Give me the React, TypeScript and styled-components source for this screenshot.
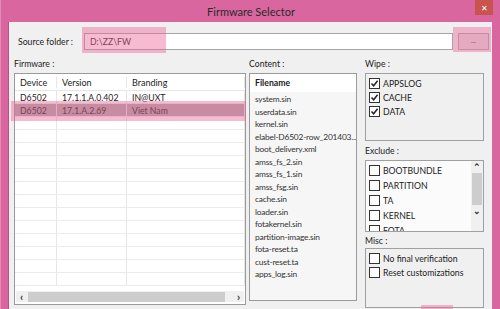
import React from "react"
import styled, { createGlobalStyle } from "styled-components"

const Global = createGlobalStyle`
  html, body { margin: 0; padding: 0; background: #d9669f; }
  body { font-family: Lato, "Noto Sans", sans-serif; }
`

const firmware = [
  { device: "D6502", version: "17.1.1.A.0.402", branding: "IN@UXT" },
  { device: "D6502", version: "17.1.A.2.69", branding: "Viet Nam", selected: true },
]

const files = [
  "system.sin",
  "userdata.sin",
  "kernel.sin",
  "elabel-D6502-row_201403...",
  "boot_delivery.xml",
  "amss_fs_2.sin",
  "amss_fs_1.sin",
  "amss_fsg.sin",
  "cache.sin",
  "loader.sin",
  "fotakernel.sin",
  "partition-image.sin",
  "fota-reset.ta",
  "cust-reset.ta",
  "apps_log.sin",
]

const CheckMark = () => (
  <svg width="9" height="9" viewBox="0 0 9 9">
    <path d="M1.5 4.6 L3.6 6.8 L7.6 1.8" stroke="#222" strokeWidth="1.5" fill="none" />
  </svg>
)

const Check = ({ label, checked }: { label: string; checked?: boolean }) => (
  <CheckRow>
    <Box>{checked && <CheckMark />}</Box>
    <span>{label}</span>
  </CheckRow>
)

const App = () => {
  return (
    <Window>
      <Global />
      <TitleBar>
        Firmware Selector
        <CloseButton>✕</CloseButton>
      </TitleBar>
      <Client>
        <SourceRow>
          <SourceLabel>Source folder :</SourceLabel>
          <TextBox>D:\ZZ\FW</TextBox>
          <BrowseButton>...</BrowseButton>
        </SourceRow>
        <Columns>
          <Column>
            <GroupLabel>Firmware :</GroupLabel>
            <TablePanel>
              <Table>
                <HeadRow>
                  <Cell w={42}>Device</Cell>
                  <Cell w={70}>Version</Cell>
                  <Cell>Branding</Cell>
                </HeadRow>
                {firmware.map((f, i) => (
                  <Row key={i} selected={f.selected}>
                    <Cell w={42}>{f.device}</Cell>
                    <Cell w={70}>{f.version}</Cell>
                    <Cell>{f.branding}</Cell>
                  </Row>
                ))}
                {Array.from({ length: 13 }).map((_, i) => (
                  <Row key={"e" + i}>
                    <Cell w={42} />
                    <Cell w={70} />
                    <Cell />
                  </Row>
                ))}
              </Table>
              <HScroll>
                <Arrow>‹</Arrow>
                <HThumb />
                <Arrow>›</Arrow>
              </HScroll>
            </TablePanel>
          </Column>
          <Column>
            <GroupLabel>Content :</GroupLabel>
            <ListPanel>
              <ListHead>Filename</ListHead>
              {files.map((f) => (
                <ListItem key={f}>{f}</ListItem>
              ))}
            </ListPanel>
          </Column>
          <Column>
            <GroupLabel>Wipe :</GroupLabel>
            <OptionBox h={68}>
              <Check label="APPSLOG" checked />
              <Check label="CACHE" checked />
              <Check label="DATA" checked />
            </OptionBox>
            <GroupLabel>Exclude :</GroupLabel>
            <OptionBox h={72} white>
              <ExcludeList>
                <Check label="BOOTBUNDLE" />
                <Check label="PARTITION" />
                <Check label="TA" />
                <Check label="KERNEL" />
                <Check label="FOTA" />
              </ExcludeList>
              <VScroll>
                <VArrow>⌃</VArrow>
                <VThumb />
                <VArrow>⌄</VArrow>
              </VScroll>
            </OptionBox>
            <GroupLabel compact>Misc :</GroupLabel>
            <OptionBox h={60}>
              <Check label="No final verification" />
              <Check label="Reset customizations" />
            </OptionBox>
          </Column>
        </Columns>
        <Mark style={{ left: 73, top: 5, width: 84, height: 26 }} />
        <Mark style={{ left: 444, top: 5, width: 38, height: 25 }} />
        <Mark style={{ left: 2, top: 79, width: 235, height: 20 }} />
        <Mark style={{ left: 412, top: 283, width: 32, height: 4 }} />
      </Client>
    </Window>
  )
}

export default App

const Window = styled.div`
  width: 500px;
  height: 309px;
  background: #d9669f;
  display: flex;
  flex-direction: column;
  overflow: hidden;
  border-left: 1px solid #e58ab8;
`

const TitleBar = styled.div`
  position: relative;
  height: 22px;
  display: flex;
  align-items: center;
  justify-content: center;
  font-size: 11px;
  color: #2a2a2a;
  padding-top: 1px;
  box-sizing: border-box;
`

const CloseButton = styled.div`
  position: absolute;
  right: 8px;
  top: 0;
  width: 18px;
  height: 15px;
  background: #c9544f;
  color: #fff;
  font-size: 8px;
  display: flex;
  align-items: center;
  justify-content: center;
`

const Client = styled.div`
  position: relative;
  flex: 1;
  margin: 0 9px 0 7px;
  background: #f0f0f0;
  border-left: 1px solid #b8508a;
  padding: 11px 2px 0 5px;
  display: flex;
  flex-direction: column;
  font-size: 8.7px;
  color: #1c1c1c;
`

const SourceRow = styled.div`
  display: flex;
  align-items: center;
  height: 17px;
`

const SourceLabel = styled.div`
  width: 70px;
  padding-left: 4px;
  box-sizing: border-box;
`

const TextBox = styled.div`
  flex: 1;
  height: 17px;
  box-sizing: border-box;
  background: #fff;
  border: 1px solid #a5a5a5;
  padding: 0 5px;
  display: flex;
  align-items: center;
`

const BrowseButton = styled.div`
  width: 31px;
  height: 17px;
  margin: 0 1px 0 5px;
  box-sizing: border-box;
  border: 1px solid #acacac;
  background: #e1e1e1;
  display: flex;
  align-items: center;
  justify-content: center;
  font-size: 7px;
  padding-bottom: 3px;
`

const Columns = styled.div`
  display: grid;
  grid-template-columns: 232px 108px 124px;
  column-gap: 3px;
  margin-top: 7px;
  & > :nth-child(3) {
    margin-left: 5px;
  }
`

const Column = styled.div`
  display: flex;
  flex-direction: column;
`

const GroupLabel = styled.div<{ compact?: boolean }>`
  height: ${(p) => (p.compact ? 12 : 14)}px;
  line-height: ${(p) => (p.compact ? 12 : 14)}px;
  margin-bottom: ${(p) => (p.compact ? 1 : 2)}px;
  div + & {
    margin-top: 3px;
  }
`

const TablePanel = styled.div`
  height: 232px;
  box-sizing: border-box;
  background: #fff;
  border: 1px solid #9a9a9a;
  display: flex;
  flex-direction: column;
  overflow: hidden;
`

const Table = styled.div`
  flex: 1;
  overflow: hidden;
`

const HeadRow = styled.div`
  display: flex;
  height: 17px;
  align-items: center;
  border-bottom: 1px solid #e6e6e6;
  box-sizing: border-box;
  font-size: 9px;
`

const Row = styled.div<{ selected?: boolean }>`
  display: flex;
  height: 13px;
  box-sizing: border-box;
  border-bottom: 1px solid #ebebeb;
  background: ${(p) => (p.selected ? "#a9a9a9" : "#fff")};
`

const Cell = styled.div<{ w?: number }>`
  ${(p) => (p.w ? `width: ${p.w}px;` : "flex: 1;")}
  box-sizing: border-box;
  padding-left: 5px;
  border-right: 1px solid #e6e6e6;
  display: flex;
  align-items: center;
  white-space: nowrap;
`

const HScroll = styled.div`
  height: 11px;
  margin: 0 1px 2px 1px;
  display: flex;
  align-items: center;
  background: #f0f0f0;
`

const Arrow = styled.div`
  width: 11px;
  text-align: center;
  font-size: 11px;
  font-weight: 700;
  line-height: 11px;
  color: #333;
`

const HThumb = styled.div`
  flex: 1;
  height: 10px;
  margin: 0 8px 0 1px;
  background: #cdcdcd;
`

const ListPanel = styled.div`
  height: 228px;
  box-sizing: border-box;
  background: #f6f6f6;
  border: 1px solid #9a9a9a;
  overflow: hidden;
`

const ListHead = styled.div`
  height: 18px;
  line-height: 18px;
  padding-left: 5px;
  background: #fff;
  font-weight: 700;
  margin-bottom: 1px;
`

const ListItem = styled.div`
  height: 12.5px;
  line-height: 12.5px;
  padding-left: 5px;
  white-space: nowrap;
  font-size: 8.4px;
  letter-spacing: -0.2px;
  color: #333;
`

const OptionBox = styled.div<{ h: number; white?: boolean }>`
  position: relative;
  height: ${(p) => p.h}px;
  box-sizing: border-box;
  border: 1px solid #a0a0a0;
  background: ${(p) => (p.white ? "#fbfbfb" : "#f0f0f0")};
  padding: 2px 0 0 3px;
  display: flex;
  flex-direction: column;
  overflow: hidden;
`

const ExcludeList = styled.div`
  display: flex;
  flex-direction: column;
  gap: 1px;
`

const CheckRow = styled.div`
  display: flex;
  align-items: center;
  gap: 3px;
  height: 14px;
  white-space: nowrap;
`

const Box = styled.span`
  width: 11px;
  height: 11px;
  box-sizing: border-box;
  border: 1px solid #333;
  background: #fff;
  display: flex;
  align-items: center;
  justify-content: center;
`

const VScroll = styled.div`
  position: absolute;
  right: 0;
  top: 0;
  bottom: 0;
  width: 12px;
  background: #f0f0f0;
  display: flex;
  flex-direction: column;
  align-items: center;
`

const VArrow = styled.div`
  height: 12px;
  font-size: 9px;
  line-height: 12px;
  font-weight: 700;
  color: #333;
`

const VThumb = styled.div`
  width: 10px;
  height: 32px;
  background: #cdcdcd;
`

const Mark = styled.div`
  position: absolute;
  background: rgba(236, 104, 150, 0.45);
  pointer-events: none;
`
